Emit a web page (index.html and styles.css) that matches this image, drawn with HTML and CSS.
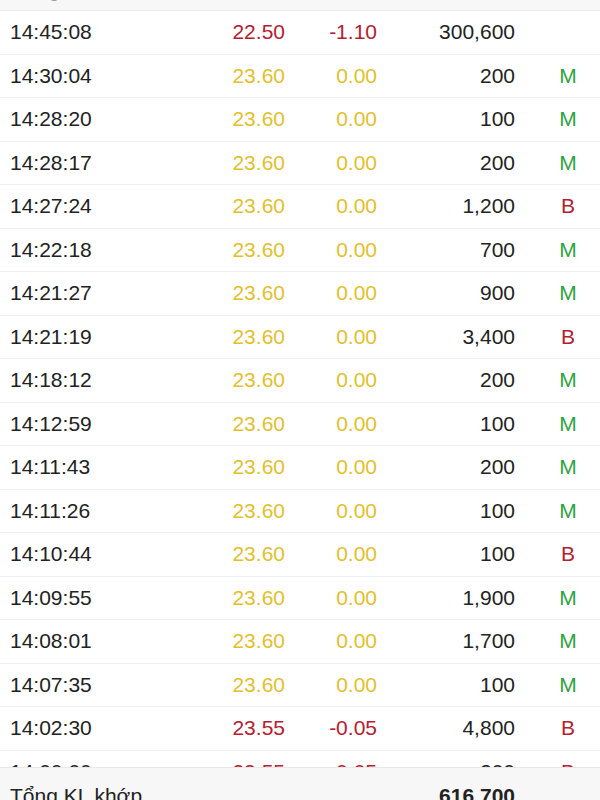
FILE: index.html
```html
<!DOCTYPE html>
<html lang="vi">
<head>
<meta charset="utf-8">
<link rel="stylesheet" href="styles.css">
</head>
<body>
<div class="app">
  <div class="head"><div class="head-row"><span>Thời gian</span><span class="r">Giá</span><span class="r">+/-</span><span class="r">KL</span><span class="c">M/B</span></div></div>
  <div class="list">
    <div class="row"><span>14:45:08</span><span class="r red">22.50</span><span class="r red">-1.10</span><span class="r">300,600</span><span class="c"></span></div>
    <div class="row"><span>14:30:04</span><span class="r yel">23.60</span><span class="r yel">0.00</span><span class="r">200</span><span class="c grn">M</span></div>
    <div class="row"><span>14:28:20</span><span class="r yel">23.60</span><span class="r yel">0.00</span><span class="r">100</span><span class="c grn">M</span></div>
    <div class="row"><span>14:28:17</span><span class="r yel">23.60</span><span class="r yel">0.00</span><span class="r">200</span><span class="c grn">M</span></div>
    <div class="row"><span>14:27:24</span><span class="r yel">23.60</span><span class="r yel">0.00</span><span class="r">1,200</span><span class="c red">B</span></div>
    <div class="row"><span>14:22:18</span><span class="r yel">23.60</span><span class="r yel">0.00</span><span class="r">700</span><span class="c grn">M</span></div>
    <div class="row"><span>14:21:27</span><span class="r yel">23.60</span><span class="r yel">0.00</span><span class="r">900</span><span class="c grn">M</span></div>
    <div class="row"><span>14:21:19</span><span class="r yel">23.60</span><span class="r yel">0.00</span><span class="r">3,400</span><span class="c red">B</span></div>
    <div class="row"><span>14:18:12</span><span class="r yel">23.60</span><span class="r yel">0.00</span><span class="r">200</span><span class="c grn">M</span></div>
    <div class="row"><span>14:12:59</span><span class="r yel">23.60</span><span class="r yel">0.00</span><span class="r">100</span><span class="c grn">M</span></div>
    <div class="row"><span>14:11:43</span><span class="r yel">23.60</span><span class="r yel">0.00</span><span class="r">200</span><span class="c grn">M</span></div>
    <div class="row"><span>14:11:26</span><span class="r yel">23.60</span><span class="r yel">0.00</span><span class="r">100</span><span class="c grn">M</span></div>
    <div class="row"><span>14:10:44</span><span class="r yel">23.60</span><span class="r yel">0.00</span><span class="r">100</span><span class="c red">B</span></div>
    <div class="row"><span>14:09:55</span><span class="r yel">23.60</span><span class="r yel">0.00</span><span class="r">1,900</span><span class="c grn">M</span></div>
    <div class="row"><span>14:08:01</span><span class="r yel">23.60</span><span class="r yel">0.00</span><span class="r">1,700</span><span class="c grn">M</span></div>
    <div class="row"><span>14:07:35</span><span class="r yel">23.60</span><span class="r yel">0.00</span><span class="r">100</span><span class="c grn">M</span></div>
    <div class="row"><span>14:02:30</span><span class="r red">23.55</span><span class="r red">-0.05</span><span class="r">4,800</span><span class="c red">B</span></div>
    <div class="row"><span>14:00:00</span><span class="r red">23.55</span><span class="r red">-0.05</span><span class="r">200</span><span class="c red">B</span></div>
    <div class="row"><span>13:58:41</span><span class="r red">23.55</span><span class="r red">-0.05</span><span class="r">500</span><span class="c red">B</span></div>
  </div>
  <div class="foot"><span>Tổng KL khớp</span><span class="r total">616,700</span><span></span></div>
</div>
</body>
</html>
```
FILE: styles.css
```css
html, body {
  margin: 0;
  padding: 0;
  background: #ffffff;
}
body {
  overflow: hidden;
  height: 800px;
  font-family: "Liberation Sans", Arial, sans-serif;
  font-size: 21px;
  color: #222222;
}
.app {
  height: 830px;
  display: flex;
  flex-direction: column;
}
.head {
  height: 10.25px;
  flex: none;
  overflow: hidden;
  background: #f7f7f7;
  border-bottom: 1px solid #ebebeb;
}
.head-row {
  display: grid;
  grid-template-columns: 180px 95px 92px 138px 1fr;
  padding-left: 10px;
  font-size: 17px;
  line-height: 20px;
  margin-top: -17px;
  color: #a0a0a0;
}
.list {
  flex: 1;
  overflow: hidden;
}
.row {
  display: grid;
  grid-template-columns: 180px 95px 92px 138px 1fr;
  padding-left: 10px;
  height: 42.5px;
  line-height: 42.5px;
  border-bottom: 1px solid #efefef;
}
.r { text-align: right; }
.c { text-align: center; padding-left: 21px; }
.red { color: #b5202f; }
.yel { color: #e3bf2c; }
.grn { color: #2ba53c; }
.foot {
  flex: none;
  height: 62px;
  display: grid;
  grid-template-columns: 367px 138px 1fr;
  padding-left: 10px;
  line-height: 56px;
  background: #f7f7f7;
  border-top: 1px solid #e8e8e8;
}
.total { font-weight: bold; }
```
